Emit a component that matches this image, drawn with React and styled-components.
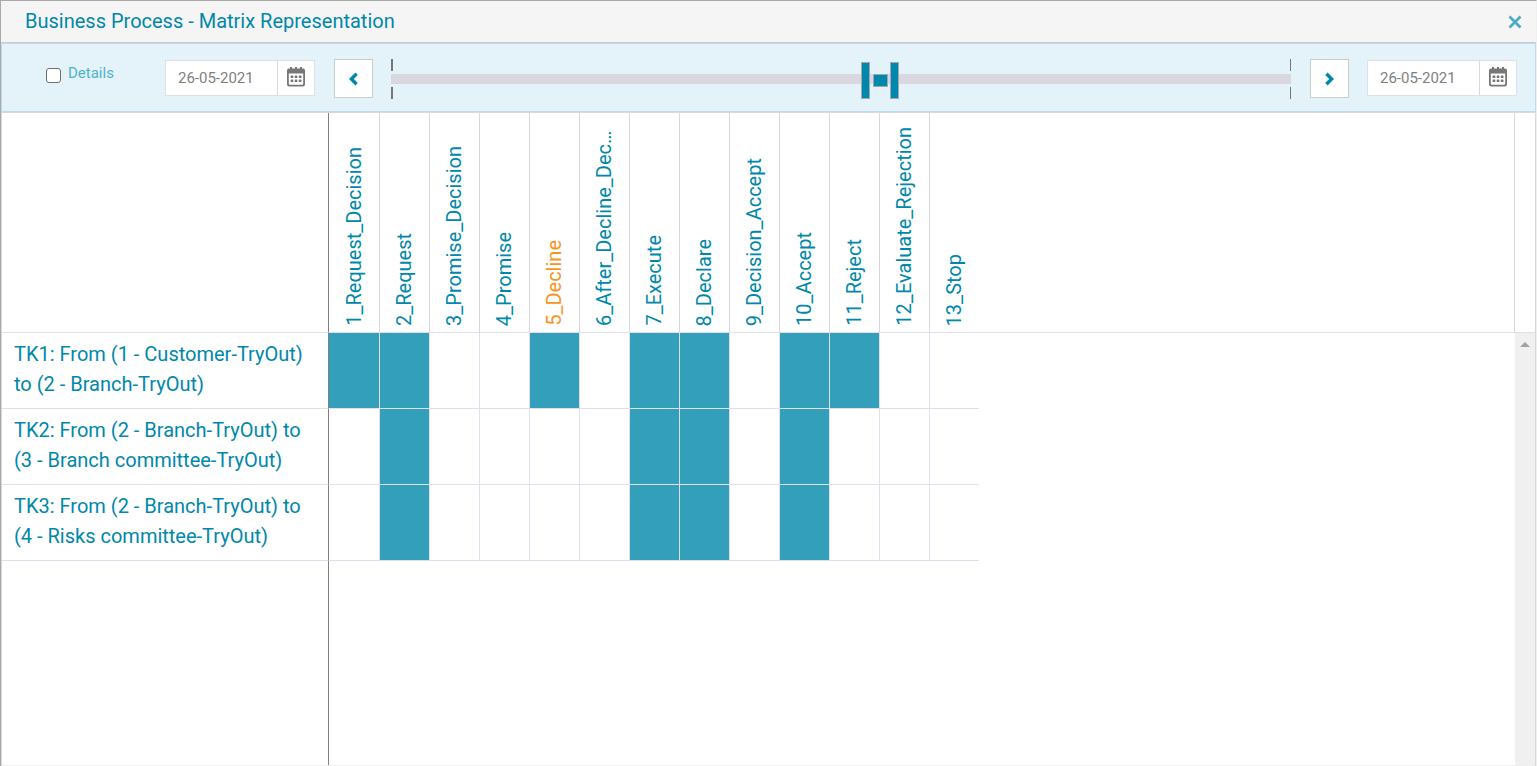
import React, { useState } from "react";
import styled, { createGlobalStyle, css } from "styled-components";

const teal = "#0088aa";

const GlobalStyle = createGlobalStyle`
  *, *::before, *::after { box-sizing: border-box; }
  body { margin: 0; font-family: Roboto, sans-serif; color: ${teal}; background: #fff; }
`;

const Dialog = styled.main`
  display: flex;
  flex-direction: column;
  min-height: 100vh;
  border-top: 1px solid #a9a9a9;
  border-left: 1px solid #a9a9a9;
  border-right: 1px solid #f0f0f0;
`;

const TitleBar = styled.header`
  display: flex;
  align-items: center;
  justify-content: space-between;
  height: 42px;
  padding: 0 14px 0 24px;
  background: #f5f5f5;
  border-bottom: 1px solid #c8ccd0;
`;

const Title = styled.h1`
  margin: 0;
  padding-bottom: 2px;
  font-size: 20px;
  line-height: 24px;
  font-weight: 400;
`;

const CloseButton = styled.button`
  display: flex;
  padding: 0;
  border: 0;
  background: none;
  color: #4dabc4;
  cursor: pointer;
`;

const Toolbar = styled.section`
  display: flex;
  align-items: flex-start;
  height: 69px;
  padding: 15px 18px 0 44px;
  background: #e4f2f9;
  border: 1px solid #bfdcea;
`;

const DetailsLabel = styled.label`
  display: flex;
  align-items: flex-start;
  width: 119px;
  margin-top: 4px;
  gap: 7px;
  font-size: 15px;
  line-height: 20px;
  color: #4db3cd;
`;

const CheckBox = styled.input`
  appearance: none;
  width: 15px;
  height: 15px;
  margin: 5px 0 0;
  border: 1px solid #707070;
  border-radius: 3px;
  background: ${(p) => (p.checked ? teal : "#fff")};
`;

const DateField = styled.div`
  display: flex;
  width: 150px;
  height: 36px;
  margin-top: 1px;
  border: 1px solid #e0e0ea;
  background: #fff;
`;

const DateInput = styled.input`
  flex: 1;
  min-width: 0;
  padding: 0 12px;
  border: 0;
  border-right: 1px solid #d8d8de;
  font: 15px Roboto, sans-serif;
  color: #7f7f7f;
  background: transparent;
`;

const CalendarButton = styled.button`
  display: flex;
  align-items: flex-start;
  justify-content: center;
  width: 36px;
  padding: 6px 0 0;
  border: 0;
  background: transparent;
  color: #777;
`;

const StepButton = styled.button`
  display: flex;
  align-items: center;
  justify-content: center;
  width: 39px;
  height: 39px;
  margin: 0 18px 0 19px;
  padding: 0;
  border: 1px solid #ccc;
  background: #fff;
  color: ${teal};
`;

const Slider = styled.div`
  position: relative;
  display: flex;
  flex-direction: column;
  justify-content: space-between;
  flex: 1;
  height: 40px;
`;

const Ticks = styled.div`
  height: 12px;
  border-left: 2px solid #777;
  border-right: 1px solid #777;
`;

const Track = styled.div`
  height: 10px;
  background: #d8d8de;
`;

const thumb = css`
  appearance: none;
  width: ${(p) => p.$w}px;
  height: ${(p) => p.$h}px;
  border: 1px solid #a5a5b8;
  border-radius: 0;
  background: ${teal};
  background-clip: padding-box;
  pointer-events: auto;
`;

const Range = styled.input`
  appearance: none;
  position: absolute;
  top: 3px;
  left: 0;
  width: 100%;
  height: 37px;
  margin: 0;
  background: transparent;
  pointer-events: none;
  &::-webkit-slider-thumb { ${thumb} }
`;

const MatrixPanel = styled.section`
  flex: 1;
  display: flex;
  border: 1px solid #d8d8dc;
  border-bottom-color: #eee;
`;

const MatrixTable = styled.table`
  width: 100%;
  table-layout: fixed;
  border-collapse: separate;
  border-spacing: 0;
`;

const Col = styled.col`
  width: ${(p) => p.$w}px;
`;

const line = "1px solid #e0e0ec";
const axis = "1px solid #808080";

const Corner = styled.td`
  height: 220px;
  padding: 0;
  border-right: ${axis};
  border-bottom: ${line};
`;

const ColumnHead = styled.th`
  padding: 0 1px 6px 0;
  vertical-align: bottom;
  font-weight: 400;
  border-right: ${(p) => (p.$last ? "0" : "1px solid #d8d8dc")};
  border-bottom: ${line};
`;

const ColumnName = styled.span`
  display: block;
  margin: 0 auto;
  max-height: 200px;
  overflow: hidden;
  text-overflow: ellipsis;
  white-space: nowrap;
  writing-mode: vertical-rl;
  transform: rotate(180deg);
  font-size: 20px;
  line-height: 24px;
  color: ${(p) => (p.$warn ? "#f7941d" : teal)};
`;

const HeadRest = styled.td`
  padding: 0;
  border-right: ${(p) => (p.$gutter ? "0" : "1px solid #d8d8dc")};
  border-bottom: ${line};
`;

const RowHead = styled.th`
  height: 76px;
  padding: 0 12px 3px 12px;
  text-align: left;
  font-weight: 400;
  font-size: 20px;
  line-height: 30px;
  border-right: ${axis};
  border-bottom: ${line};
`;

const Cell = styled.td`
  padding: 0;
  background: ${(p) => (p.$on ? "#339fbb" : "#fff")};
  background-clip: padding-box;
  border-right: ${(p) => (p.$last ? "0" : line)};
  border-bottom: ${line};
`;

const AxisRest = styled.td`
  padding: 0;
  border-right: ${axis};
`;

const Rest = styled.td`
  padding: 0;
`;

const ScrollGutter = styled.td`
  padding: 9px 0 0;
  vertical-align: top;
  text-align: center;
  line-height: 0;
  background: #f0f0f0;
`;

const columns = [
  "1_Request_Decision",
  "2_Request",
  "3_Promise_Decision",
  "4_Promise",
  "5_Decline",
  "6_After_Decline_Decision",
  "7_Execute",
  "8_Declare",
  "9_Decision_Accept",
  "10_Accept",
  "11_Reject",
  "12_Evaluate_Rejection",
  "13_Stop",
];

const columnWidth = (i) => (i === 0 ? 51 : i === columns.length - 1 ? 49 : 50);

const rows = [
  { name: "TK1: From (1 - Customer-TryOut) to (2 - Branch-TryOut)", on: [1, 2, 5, 7, 8, 10, 11] },
  { name: "TK2: From (2 - Branch-TryOut) to (3 - Branch committee-TryOut)", on: [2, 7, 8, 10] },
  { name: "TK3: From (2 - Branch-TryOut) to (4 - Risks committee-TryOut)", on: [2, 7, 8, 10] },
];

const CalendarIcon = () => (
  <svg width="18" height="20" viewBox="0 0 18 20" fill="currentColor" aria-hidden="true">
    <path fillRule="evenodd" d="M3 0h2v1.500h3V0h2v1.500h3V0h2v1.500h1a2 2 0 0 1 2 2v13.500a2.500 2.500 0 0 1-2.500 2.500h-13A2.500 2.500 0 0 1 0 17V3.500a2 2 0 0 1 2-2h1zM1.800 6.500v10q0 1.200 1.200 1.200h12q1.200 0 1.200-1.200v-10z" />
    {[8.5, 12.5].map((y) => [3.6, 7.7, 11.8].map((x) => <rect key={x + "-" + y} x={x} y={y} width="2.700" height="2.500" rx="0.500" />))}
  </svg>
);

const ChevronIcon = ({ next }) => (
  <svg width="9" height="14" viewBox="0 0 9 14" fill="currentColor" aria-hidden="true">
    <path d={next ? "M2.600 .6L.2 3l4 4-4 4 2.400 2.400L9 7z" : "M6.400 .6L8.800 3l-4 4 4 4-2.400 2.400L0 7z"} />
  </svg>
);

const CloseIcon = () => (
  <svg width="14" height="14" viewBox="0 0 14 14" fill="none" stroke="currentColor" strokeWidth="2.800" aria-hidden="true">
    <path d="M1.500 1.500l11 11M12.500 1.500l-11 11" />
  </svg>
);

function DatePicker({ label }) {
  const [value, setValue] = useState("26-05-2021");
  return (
    <DateField>
      <DateInput aria-label={label} value={value} onChange={(e) => setValue(e.target.value)} />
      <CalendarButton aria-label={"Choose " + label}><CalendarIcon /></CalendarButton>
    </DateField>
  );
}

export default function App() {
  const [details, setDetails] = useState(false);
  return (
    <Dialog>
      <GlobalStyle />
      <TitleBar>
        <Title>Business Process - Matrix Representation</Title>
        <CloseButton aria-label="Close"><CloseIcon /></CloseButton>
      </TitleBar>
      <Toolbar>
        <DetailsLabel>
          <CheckBox type="checkbox" checked={details} onChange={(e) => setDetails(e.target.checked)} />
          Details
        </DetailsLabel>
        <DatePicker label="start date" />
        <StepButton aria-label="Earlier"><ChevronIcon /></StepButton>
        <Slider>
          <Ticks />
          <Track />
          <Ticks />
          <Range type="range" aria-label="Range start" max="1000" defaultValue="528" $w={9} $h={37} />
          <Range type="range" aria-label="Range position" max="1000" defaultValue="545" $w={15} $h={13} />
          <Range type="range" aria-label="Range end" max="1000" defaultValue="560" $w={9} $h={37} />
        </Slider>
        <StepButton aria-label="Later"><ChevronIcon next /></StepButton>
        <DatePicker label="end date" />
      </Toolbar>
      <MatrixPanel>
        <MatrixTable>
          <colgroup>
            <Col $w={327} />
            {columns.map((name, i) => <Col key={name} $w={columnWidth(i)} />)}
            <col />
            <Col $w={20} />
          </colgroup>
          <thead>
            <tr>
              <Corner />
              {columns.map((name, i) => (
                <ColumnHead key={name} scope="col" $last={i === columns.length - 1}>
                  <ColumnName $warn={name === "5_Decline"}>{name}</ColumnName>
                </ColumnHead>
              ))}
              <HeadRest />
              <HeadRest $gutter />
            </tr>
          </thead>
          <tbody>
            {rows.map((row, r) => (
              <tr key={row.name}>
                <RowHead scope="row">{row.name}</RowHead>
                {columns.map((name, i) => (
                  <Cell key={name} $on={row.on.includes(i + 1)} $last={i === columns.length - 1} />
                ))}
                <Rest />
                {r === 0 && (
                  <ScrollGutter rowSpan={rows.length + 1}>
                    <svg width="10" height="5" viewBox="0 0 10 5" fill="#a3a3a3" aria-hidden="true"><path d="M5 0l5 5H0z" /></svg>
                  </ScrollGutter>
                )}
              </tr>
            ))}
            <tr>
              <AxisRest />
              <Rest colSpan={columns.length + 1} />
            </tr>
          </tbody>
        </MatrixTable>
      </MatrixPanel>
    </Dialog>
  );
}
